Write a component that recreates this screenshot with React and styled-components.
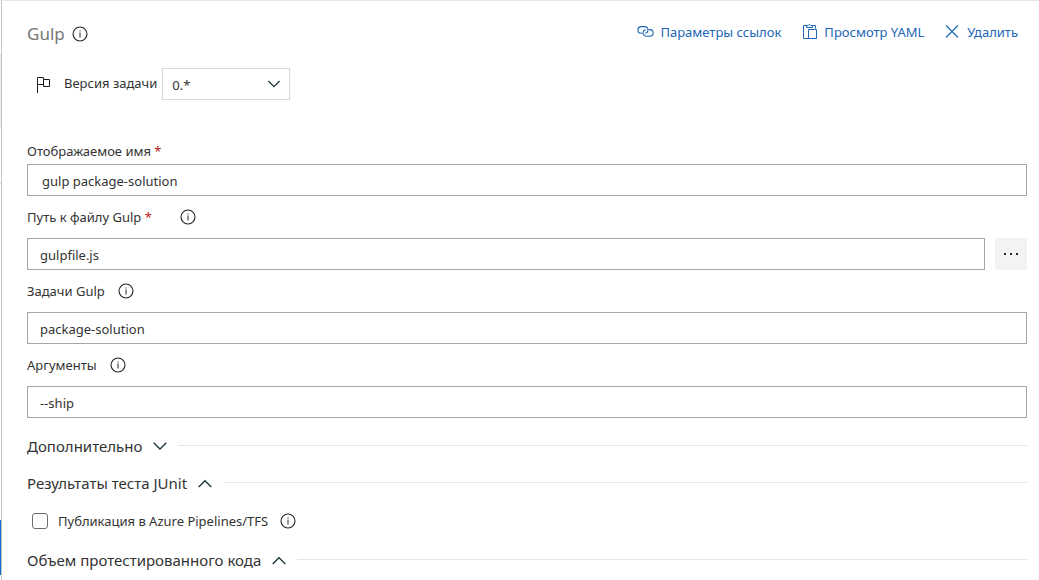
import React, { useState } from 'react';
import styled, { createGlobalStyle } from 'styled-components';

const colors = {
  text: '#333333',
  muted: '#767676',
  link: '#1b66b8',
  required: '#b4151b',
  border: '#a6a6a6',
  light: '#d9d9d9',
  line: '#e6e6e6',
  accent: '#0a6cce',
};

const GlobalStyle = createGlobalStyle`
  *, *::before, *::after {
    box-sizing: border-box;
  }
  body {
    margin: 0;
    background: #ffffff;
    color: ${colors.text};
    font-family: "Noto Sans", "Open Sans", sans-serif;
    font-size: 13px;
    line-height: 20px;
  }
  input, select, button {
    font: inherit;
    color: inherit;
  }
`;

const Page = styled.div`
  display: flex;
  min-height: 100vh;
  border-top: 1px solid ${colors.line};
`;

const Rail = styled.div`
  display: flex;
  flex-direction: column;
  flex: 0 0 1px;
`;

const RailItem = styled.div`
  height: ${props => props.height}px;
  background: ${props => props.fill || 'transparent'};
  border-bottom: ${props => (props.divided ? `1px solid ${colors.light}` : 'none')};
`;

const RailSpace = styled.div`
  flex: 1;
`;

const Panel = styled.main`
  flex: 1;
  min-width: 0;
  border-left: 1px solid #c4c4c4;
  padding: 19px 12px 0 25px;
`;

const Header = styled.header`
  display: flex;
  align-items: center;
  justify-content: space-between;
  height: 28px;
`;

const Title = styled.h1`
  display: flex;
  align-items: center;
  gap: 7px;
  margin: 0;
  color: ${colors.muted};
  font-size: 17px;
  font-weight: 400;
  line-height: 28px;
`;

const Actions = styled.div`
  display: flex;
  align-items: center;
  gap: 21px;
  padding: 0 9px 4px 0;
`;

const Action = styled.button`
  display: flex;
  align-items: center;
  gap: 6px;
  padding: 0;
  border: 0;
  background: none;
  color: ${colors.link};
  cursor: pointer;
`;

const VersionRow = styled.div`
  display: flex;
  align-items: center;
  height: 32px;
  margin: 20px 0 40px;
  padding-left: 8px;
`;

const VersionLabel = styled.label`
  margin: 0 5px 0 12px;
  padding-bottom: 2px;
`;

const SelectWrap = styled.div`
  display: grid;
  align-items: center;
  width: 128px;

  > * {
    grid-area: 1 / 1;
  }
  > svg {
    justify-self: end;
    margin-right: 9px;
    pointer-events: none;
  }
`;

const Select = styled.select`
  appearance: none;
  width: 100%;
  height: 32px;
  padding: 2px 9px 0;
  border: 1px solid ${colors.light};
  border-radius: 0;
  background: #ffffff;
`;

const Field = styled.div`
  margin-bottom: 10px;
`;

const LabelRow = styled.div`
  display: flex;
  align-items: center;
  gap: ${props => props.gap || 13}px;
  height: ${props => (props.compact ? 24 : 32)}px;
  padding-bottom: ${props => (props.compact ? 2 : 10)}px;
`;

const Required = styled.span`
  color: ${colors.required};
`;

const InputRow = styled.div`
  display: flex;
  gap: 10px;
`;

const Input = styled.input`
  flex: 1;
  min-width: 0;
  height: 32px;
  padding: 2px ${props => (props.wide ? 14 : 12)}px 0;
  border: 1px solid ${colors.border};
  border-radius: 0;
  background: #ffffff;
`;

const MoreButton = styled.button`
  display: flex;
  align-items: center;
  justify-content: center;
  width: 32px;
  height: 32px;
  padding: 0;
  border: 0;
  background: #f3f3f3;
`;

const InfoButton = styled.button`
  display: flex;
  padding: 0;
  border: 0;
  background: none;
`;

const Sections = styled.div`
  margin-top: -1px;
`;

const SectionRow = styled.h2`
  display: flex;
  align-items: center;
  height: 37px;
  margin: 0;
  font-weight: 400;

  &::after {
    content: '';
    flex: 1;
    height: 1px;
    margin-left: 10px;
    background: ${colors.line};
  }
`;

const SectionButton = styled.button`
  display: flex;
  align-items: center;
  gap: 10px;
  padding: 0;
  border: 0;
  background: none;
  font-size: 15px;
  line-height: 24px;
`;

const CheckRow = styled.div`
  display: flex;
  align-items: center;
  height: 40px;
  padding-left: 5px;
`;

const Checkbox = styled.input`
  appearance: none;
  width: 16px;
  height: 16px;
  margin: 0 10px 0 0;
  border: 1px solid #6f6f6f;
  border-radius: 3px;
  background: #ffffff;

  &:checked {
    background: ${colors.accent};
  }
`;

const CheckLabel = styled.label`
  margin-right: 12px;
`;

const InfoIcon = () => (
  <svg width="16" height="16" viewBox="0 0 16 16" fill="none" stroke="#222222">
    <circle cx="8" cy="8" r="7" strokeWidth="1.1" />
    <path d="M8 6.5V11.5M8 4.5V5.5" />
  </svg>
);

const Info = () => (
  <InfoButton type="button" aria-label="Справка">
    <InfoIcon />
  </InfoButton>
);

const Chevron = ({ up }) => (
  <svg width="16" height="16" viewBox="0 0 16 16" fill="none" stroke="#16323a" strokeWidth="1.3">
    <path d={up ? 'M1.7 12L8 5.7L14.3 12' : 'M1.7 4.7L8 11L14.3 4.7'} />
  </svg>
);

const SmallChevron = () => (
  <svg width="14" height="14" viewBox="0 0 14 14" fill="none" stroke="#16323a" strokeWidth="1.2">
    <path d="M1.4 4L7 9.6L12.6 4" />
  </svg>
);

const FlagIcon = () => (
  <svg width="17" height="17" viewBox="0 0 17 17" fill="none" stroke="#1c1c1c">
    <path d="M2.5 17V1.5H8.5V3.5H14.5V10.5H8.5V8.5H2.5M8.5 3.5V8.5" />
  </svg>
);

const LinkIcon = () => (
  <svg width="17" height="16" viewBox="0 0 17 16" fill="none" stroke="currentColor" strokeWidth="1.1">
    <path d="M5.2 9.2H4.2A3.3 3.3 0 0 1 4.2 2.6H7.6A3.3 3.3 0 0 1 10.9 6.8A3.2 3.2 0 0 1 8.4 9.2" />
    <path d="M11.8 5.6H12.8A3.3 3.3 0 0 1 12.8 12.2H9.4A3.3 3.3 0 0 1 6.1 8A3.2 3.2 0 0 1 8.6 5.6" />
  </svg>
);

const PasteIcon = () => (
  <svg width="16" height="18" viewBox="0 0 16 18" fill="none" stroke="currentColor">
    <path d="M6.5 15.5H1.5V2.5H4.5M10.5 2.5H13.5V5.5M4.5 4.5V2.5H6.2A1.4 1.4 0 0 1 8.8 2.5H10.5V4.5H4.5Z" />
    <path d="M6.5 6.5H14.5V15.5H6.5Z" />
  </svg>
);

const CloseIcon = () => (
  <svg width="16" height="14" viewBox="0 0 16 14" fill="none" stroke="currentColor" strokeWidth="1.1">
    <path d="M1 0.5L13 12.5M13 0.5L1 12.5" />
  </svg>
);

const MoreIcon = () => (
  <svg width="14" height="2" viewBox="0 0 14 2" fill="#33211b">
    <path d="M0 0H2V2H0ZM6 0H8V2H6ZM12 0H14V2H12Z" />
  </svg>
);

const TextField = ({ id, label, value, required, info, gap, compact, wide, children }) => (
  <Field>
    <LabelRow gap={gap} compact={compact}>
      <label htmlFor={id}>
        {label} {required && <Required>*</Required>}
      </label>
      {info && <Info />}
    </LabelRow>
    <InputRow>
      <Input id={id} type="text" defaultValue={value} required={required} wide={wide} />
      {children}
    </InputRow>
  </Field>
);

const Section = ({ title, open }) => (
  <SectionRow>
    <SectionButton type="button" aria-expanded={!!open}>
      {title}
      <Chevron up={open} />
    </SectionButton>
  </SectionRow>
);

export default function App() {
  const [publish, setPublish] = useState(false);

  return (
    <Page>
      <GlobalStyle />
      <Rail>
        <RailItem height={55} divided />
        <RailItem height={72} fill="#ececec" />
        <RailItem height={56} divided />
        <RailSpace />
        <RailItem height={55} fill={colors.accent} />
        <RailItem height={5} />
      </Rail>
      <Panel>
        <Header>
          <Title>
            Gulp
            <Info />
          </Title>
          <Actions>
            <Action type="button">
              <LinkIcon />
              Параметры ссылок
            </Action>
            <Action type="button">
              <PasteIcon />
              Просмотр YAML
            </Action>
            <Action type="button">
              <CloseIcon />
              Удалить
            </Action>
          </Actions>
        </Header>

        <VersionRow>
          <FlagIcon />
          <VersionLabel htmlFor="version">Версия задачи</VersionLabel>
          <SelectWrap>
            <Select id="version" defaultValue="0.*">
              <option value="0.*">0.*</option>
            </Select>
            <SmallChevron />
          </SelectWrap>
        </VersionRow>

        <TextField id="name" label="Отображаемое имя" value="gulp package-solution" required compact wide />
        <TextField id="path" label="Путь к файлу Gulp" value="gulpfile.js" required info gap={28}>
          <MoreButton type="button" aria-label="Обзор">
            <MoreIcon />
          </MoreButton>
        </TextField>
        <TextField id="tasks" label="Задачи Gulp" value="package-solution" info />
        <TextField id="args" label="Аргументы" value="--ship" info />

        <Sections>
          <Section title="Дополнительно" />
          <Section title="Результаты теста JUnit" open />
          <CheckRow>
            <Checkbox
              id="publish"
              type="checkbox"
              checked={publish}
              onChange={e => setPublish(e.target.checked)}
            />
            <CheckLabel htmlFor="publish">Публикация в Azure Pipelines/TFS</CheckLabel>
            <Info />
          </CheckRow>
          <Section title="Объем протестированного кода" open />
        </Sections>
      </Panel>
    </Page>
  );
}
